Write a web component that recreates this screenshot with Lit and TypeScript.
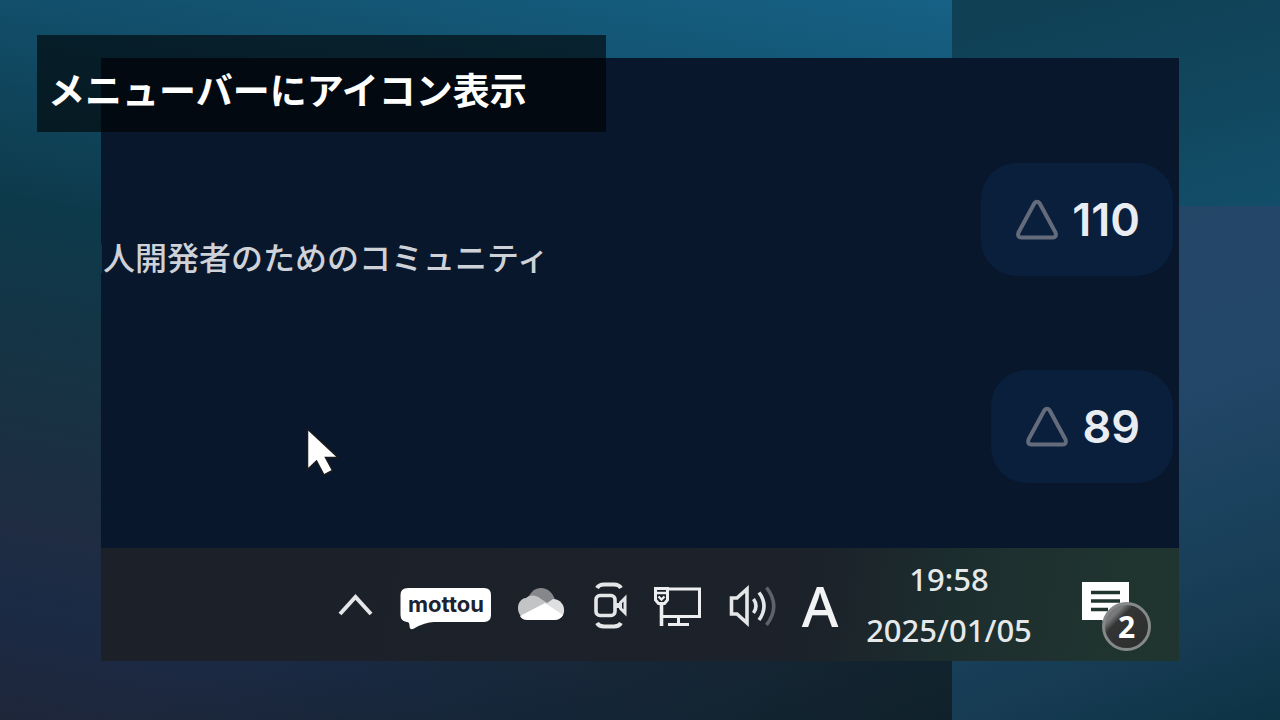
import { LitElement, html, svg, css } from "lit";
import { customElement, property } from "lit/decorators.js";

@customElement("vote-button")
class VoteButton extends LitElement {
  @property({ type: Number }) count = 0;

  static styles = css`
    :host { display: block; }
    .vote {
      display: flex; align-items: center; gap: 13px;
      height: 113px; padding: 0 33px 0 34px; border: 0; border-radius: 36px;
      background: #0a1f3c; color: #e9edf2;
      font: 600 45px/56px Inter, sans-serif;
    }
    .triangle { display: block; width: 44px; height: 42px; }
  `;

  render() {
    return html`<button class="vote" type="button" aria-label="Upvote, ${this.count}">
      <svg class="triangle" viewBox="0 0 44 42" fill="none" stroke="#646c7c" stroke-width="4" stroke-linejoin="round">
        <path d="M19.4 4.3Q22 1.1 24.6 4.3L40.500 33.500Q42 38.500 37.500 38.500H6.500Q2 38.500 3.500 33.500Z" />
      </svg>
      <span>${this.count}</span>
    </button>`;
  }
}

const chevron = svg`<path d="M2 33L17.500 16L33 33" fill="none" stroke="#e4e6e8" stroke-width="4"/>`;

const cloud = svg`<g transform="translate(-1 4)">
  <path d="M10 18C11 9 17 3 24 3C31 3 36 8 38 15L26 24Z" fill="#85878b"/>
  <path d="M8 34C-2 30-1 14 9 13C13 9 20 10 24 14L32 19L8 34Z" fill="#c3c4c6"/>
  <path d="M26 21L36 14C43 14 48 20 47 27C46 32 43 34 39 34Z" fill="#dedfe0"/>
  <path d="M3 31L28 18L46 30Q43 35 38 35H10Q5 35 3 31Z" fill="#fff"/></g>`;

const camera = svg`<g fill="none" stroke="#e4e6e8">
  <path d="M5 7Q7 3.500 12 3.500H22Q27 3.500 29 7" stroke-width="4"/>
  <path d="M5 42Q7 45.500 12 45.500H22Q27 45.500 29 42" stroke-width="4"/>
  <rect x="4" y="14.500" width="19" height="20" rx="4" stroke-width="3.6"/>
  <path d="M33 17V32L28.500 27.500V21.500Z" stroke-width="3"/>
  <path d="M23 24.500H28" stroke-width="5"/></g>`;

const network = svg`<g fill="none" stroke="#eceeef" stroke-width="3" transform="translate(-1 1)">
  <path d="M13 7H46.500V34.500H10"/>
  <path d="M25.500 35V42M15 42.500H36"/>
  <path d="M2.500 6.500H14.500V18L11.500 21.500H5.500L2.500 18Z"/>
  <path d="M3 11H14M5.500 14.500L8.500 17.500L11.500 14.500" stroke-width="2.4"/>
  <path d="M8.500 21V44" stroke-width="3.6"/></g>`;

const speaker = svg`<g fill="none" stroke="#e4e6e8" stroke-width="3.6" transform="translate(0 1)">
  <path d="M3.500 16H9L19 7V41L9 32H3.500Z"/>
  <path d="M25.500 17Q30.500 24 25.500 31" />
  <path d="M31 10.500Q41 24 31 38" />
  <path d="M38.500 5.500Q53 24 38.500 43" stroke="#5d636a"/></g>`;

@customElement("app-root")
class AppRoot extends LitElement {
  static styles = css`
    :host {
      display: flex; position: relative; box-sizing: border-box;
      min-height: 100vh; padding: 58px 101px 59px; overflow: hidden;
      font-family: "Noto Sans CJK JP", sans-serif;
      background:
        linear-gradient(165deg, #0f3f53 0%, #11465d 50%, #124e69 100%) 100% 0 / 328px 206px no-repeat,
        linear-gradient(160deg, #244667 0%, #234769 40%, #1b425e 62%, #163b53 82%, #0c3344 100%) 100% 206px / 328px calc(100% - 206px) no-repeat,
        linear-gradient(150deg, rgba(14, 32, 40, 0) 62%, rgba(14, 32, 40, .9) 100%) 0 0 / calc(100% - 328px) 100% no-repeat,
        linear-gradient(191deg, #166185 0%, #124f6b 20%, #0d3a4b 42%, #163344 60%, #1f2c42 78%, #1b2a45 87%, #1e263a 100%) 0 0 / calc(100% - 328px) 100% no-repeat;
    }
    .window {
      display: flex; flex: 1; flex-direction: column; position: relative;
      min-width: 0; overflow: hidden; background: #08172c;
    }
    .posts {
      display: flex; flex: 1; flex-direction: column; gap: 94px;
      margin: 0; padding: 105px 6px 0 0; list-style: none;
    }
    .post { display: flex; justify-content: flex-end; align-items: flex-start; height: 113px; }
    .summary {
      flex: 1; margin: 69px 0 0 -30px; white-space: nowrap;
      color: #ced2d8; font-size: 32px; font-weight: 500; line-height: 48px;
    }
    .caption {
      position: absolute; top: 35px; left: 37px; box-sizing: border-box;
      min-width: 569px; margin: 0; padding: 27px 11px 16px;
      background: rgba(0, 0, 0, .6); color: #fff;
      font-size: 37px; font-weight: 700; line-height: 54px; white-space: nowrap;
    }
    .cursor { position: absolute; left: 204px; top: 367px; width: 36px; height: 52px; }
    .taskbar {
      display: flex; justify-content: flex-end; align-items: center; gap: 26px;
      height: 113px; padding-right: 27px;
      background: linear-gradient(100deg, #1c2129 0%, #1c222a 66%, #1c2d2e 78%, #1f322f 88%, #203530 100%);
    }
    .item {
      display: block; flex: none; padding: 0; border: 0; background: none; color: #f2f3f4;
      font-family: "Noto Sans", sans-serif; font-weight: 500;
    }
    .icon { display: block; height: 48px; }
    .narrow { width: 36px; }
    .wide { width: 48px; }
    .brand { display: grid; width: 92px; margin-top: 8px; }
    .bubble, .name { grid-area: 1 / 1; }
    .bubble { display: block; width: 92px; height: 42px; }
    .name { color: #1c2230; font: 700 22px/33px Inter, sans-serif; text-align: center; }
    .ime { display: flex; justify-content: center; width: 36px; font-size: 56px; line-height: 64px; }
    .clock { width: 170px; font-size: 31px; line-height: 51px; text-align: center; color: #e6e9ea; }
    .time { display: block; }
    .notices {
      display: flex; align-items: flex-start; position: relative;
      width: 70px; height: 70px; margin: 24px 0 0 22px;
    }
    .note { display: block; width: 48px; height: 48px; }
    .badge {
      position: absolute; right: 1px; bottom: 1px; box-sizing: border-box;
      width: 49px; height: 49px; border: 3px solid #85898a; border-radius: 50%;
      background: linear-gradient(135deg, #77797a 22%, #333535 34%, #2c2e2e 100%); color: #fff;
      font-size: 30px; font-weight: 700; line-height: 43px; text-align: center;
    }
  `;

  private icon(label: string, size: string, shape: unknown) {
    const width = size === "wide" ? 48 : 36;
    return html`<button class="item" type="button" aria-label=${label}>
      <svg class="icon ${size}" viewBox="0 0 ${width} 48">${shape}</svg>
    </button>`;
  }

  render() {
    return html`
      <main class="window">
        <ul class="posts">
          <li class="post">
            <p class="summary">個人開発者のためのコミュニティ</p>
            <vote-button .count=${110}></vote-button>
          </li>
          <li class="post"><vote-button .count=${89}></vote-button></li>
        </ul>
        <svg class="cursor" viewBox="0 0 36 52" aria-hidden="true">
          <path d="M2.500 4V44.500L11.500 36L19 50L27.500 45.500L20.500 32.500H33Z" fill="#fff" stroke="#1b1b1b" stroke-width="1.5"/>
        </svg>
        <footer class="taskbar">
          ${this.icon("Show hidden icons", "narrow", chevron)}
          <button class="item brand" type="button">
            <svg class="bubble" viewBox="0 0 92 42">
              <path d="M8 0H84Q91 0 91 7V27Q91 34 84 34H34Q25 34 14 40.500Q10 43 9.500 38Q9.500 34 7 34Q.5 33 .5 27V7Q.5 0 8 0Z" fill="#fff"/>
            </svg>
            <span class="name">mottou</span>
          </button>
          ${this.icon("OneDrive", "wide", cloud)}
          ${this.icon("Meet now", "narrow", camera)}
          ${this.icon("Network", "wide", network)}
          ${this.icon("Volume", "wide", speaker)}
          <button class="item ime" type="button">A</button>
          <button class="item clock" type="button">
            <span class="time">19:58</span><span class="time">2025/01/05</span>
          </button>
          <button class="item notices" type="button">
            <svg class="note" viewBox="0 0 48 48">
              <path d="M0 0H47V38H30V48L20 38H0Z" fill="#fff"/>
              <path d="M9 10.500H38M9 19H38M9 27.500H26" stroke="#203430" stroke-width="3.500"/>
            </svg>
            <span class="badge">2</span>
          </button>
        </footer>
      </main>
      <h1 class="caption">メニューバーにアイコン表示</h1>
    `;
  }
}
